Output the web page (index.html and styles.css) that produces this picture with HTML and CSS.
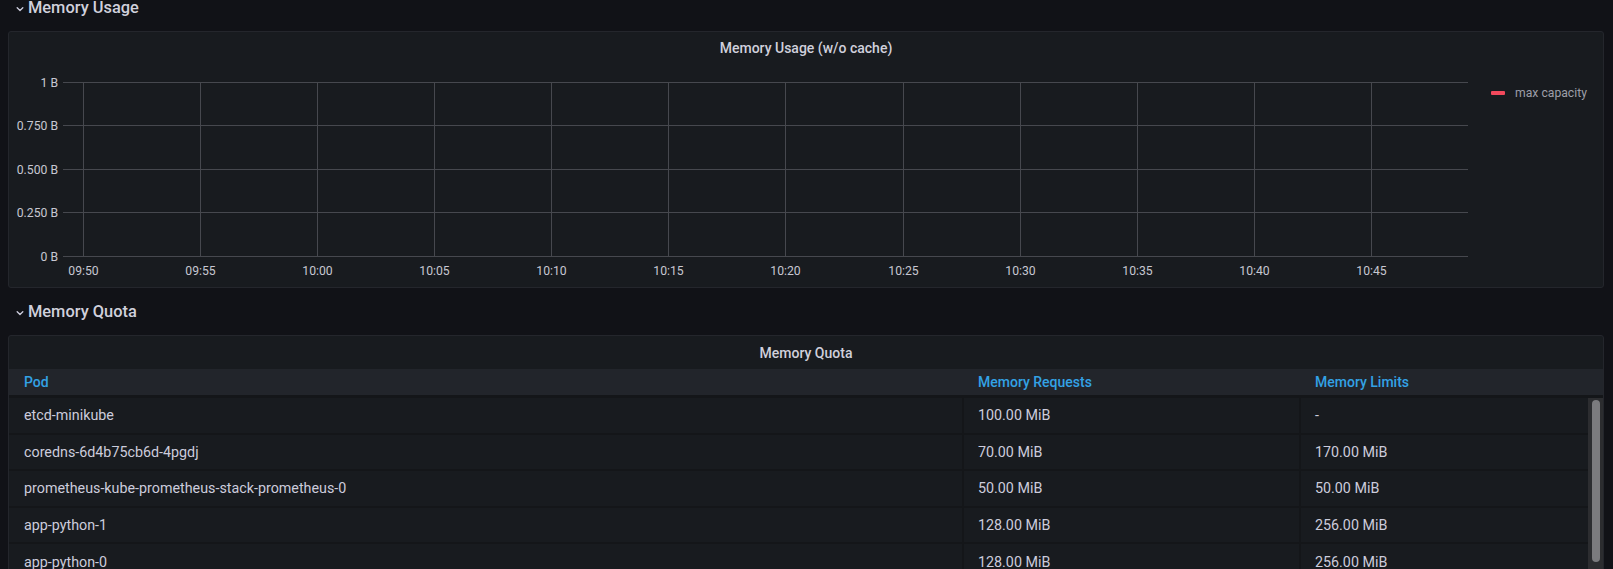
FILE: index.html
```html
<!DOCTYPE html>
<html>
<head>
<meta charset="utf-8">
<link rel="stylesheet" href="styles.css">
</head>
<body>
<div class="page">
  <div class="row-title">
    <svg class="chev" viewBox="0 0 12 12" width="12" height="12"><path d="M3.2 4.8 L6 7.4 L8.8 4.8" fill="none" stroke="#ccccdc" stroke-width="1.4" stroke-linecap="round" stroke-linejoin="round"/></svg>
    <span>Memory Usage</span>
  </div>
  <section class="panel panel-graph">
    <header class="panel-header">Memory Usage (w/o cache)</header>
    <div class="graph-body">
      <svg class="chart" width="1460" height="223" viewBox="0 0 1460 223">
        <g stroke="#46484e" stroke-width="1">
          <line x1="54" y1="18.5" x2="1459" y2="18.5"/>
          <line x1="54" y1="61.5" x2="1459" y2="61.5"/>
          <line x1="54" y1="105.5" x2="1459" y2="105.5"/>
          <line x1="54" y1="148.5" x2="1459" y2="148.5"/>
          <line x1="54" y1="192.5" x2="1459" y2="192.5"/>
          <line x1="74.5" y1="18.5" x2="74.5" y2="192.5"/>
          <line x1="191.5" y1="18.5" x2="191.5" y2="192.5"/>
          <line x1="308.5" y1="18.5" x2="308.5" y2="192.5"/>
          <line x1="425.5" y1="18.5" x2="425.5" y2="192.5"/>
          <line x1="542.5" y1="18.5" x2="542.5" y2="192.5"/>
          <line x1="659.5" y1="18.5" x2="659.5" y2="192.5"/>
          <line x1="776.5" y1="18.5" x2="776.5" y2="192.5"/>
          <line x1="894.5" y1="18.5" x2="894.5" y2="192.5"/>
          <line x1="1011.5" y1="18.5" x2="1011.5" y2="192.5"/>
          <line x1="1128.5" y1="18.5" x2="1128.5" y2="192.5"/>
          <line x1="1245.5" y1="18.5" x2="1245.5" y2="192.5"/>
          <line x1="1362.5" y1="18.5" x2="1362.5" y2="192.5"/>
        </g>
        <g class="ylab" text-anchor="end">
          <text x="49" y="22.5">1 B</text>
          <text x="49" y="65.5">0.750 B</text>
          <text x="49" y="109.5">0.500 B</text>
          <text x="49" y="152.5">0.250 B</text>
          <text x="49" y="196.5">0 B</text>
        </g>
        <g class="xlab" text-anchor="middle">
          <text x="74.5" y="211">09:50</text>
          <text x="191.5" y="211">09:55</text>
          <text x="308.5" y="211">10:00</text>
          <text x="425.5" y="211">10:05</text>
          <text x="542.5" y="211">10:10</text>
          <text x="659.5" y="211">10:15</text>
          <text x="776.5" y="211">10:20</text>
          <text x="894.5" y="211">10:25</text>
          <text x="1011.5" y="211">10:30</text>
          <text x="1128.5" y="211">10:35</text>
          <text x="1245.5" y="211">10:40</text>
          <text x="1362.5" y="211">10:45</text>
        </g>
      </svg>
      <div class="legend">
        <div class="legend-item"><span class="legend-mark"></span><span>max capacity</span></div>
      </div>
    </div>
  </section>

  <div class="row-title">
    <svg class="chev" viewBox="0 0 12 12" width="12" height="12"><path d="M3.2 4.8 L6 7.4 L8.8 4.8" fill="none" stroke="#ccccdc" stroke-width="1.4" stroke-linecap="round" stroke-linejoin="round"/></svg>
    <span>Memory Quota</span>
  </div>
  <section class="panel panel-table">
    <header class="panel-header tall">Memory Quota</header>
    <div class="thead">
      <div class="th">Pod</div>
      <div class="th">Memory Requests</div>
      <div class="th">Memory Limits</div>
    </div>
    <div class="tbody-wrap">
      <div class="tbody">
        <div class="tr"><div class="td">etcd-minikube</div><div class="td sep">100.00 MiB</div><div class="td sep">-</div></div>
        <div class="tr"><div class="td">coredns-6d4b75cb6d-4pgdj</div><div class="td sep">70.00 MiB</div><div class="td sep">170.00 MiB</div></div>
        <div class="tr"><div class="td">prometheus-kube-prometheus-stack-prometheus-0</div><div class="td sep">50.00 MiB</div><div class="td sep">50.00 MiB</div></div>
        <div class="tr"><div class="td">app-python-1</div><div class="td sep">128.00 MiB</div><div class="td sep">256.00 MiB</div></div>
        <div class="tr"><div class="td">app-python-0</div><div class="td sep">128.00 MiB</div><div class="td sep">256.00 MiB</div></div>
        <div class="tr"><div class="td">kube-apiserver-minikube</div><div class="td sep">-</div><div class="td sep">-</div></div>
      </div>
      <div class="scroll-track"><div class="scroll-thumb"></div></div>
    </div>
  </section>
</div>
</body>
</html>
```

FILE: styles.css
```css
html, body {
  margin: 0;
  padding: 0;
  height: 569px;
  overflow: hidden;
  background: #111217;
}

body {
  font-family: Roboto, "Liberation Sans", sans-serif;
  color: #ccccdc;
}

.page {
  margin-top: -16px;
  padding: 0 9px 0 8px;
}

.row-title {
  height: 47px;
  display: flex;
  align-items: center;
  gap: 2px;
  padding-left: 6px;
  font-size: 16.4px;
  font-weight: 500;
  color: #d0d0dc;
}

.chev {
  display: block;
  margin-top: 2px;
}

.panel {
  background: #181b1f;
  border: 1px solid #24262c;
  border-radius: 3px;
  box-sizing: border-box;
}

.panel-graph {
  height: 257px;
}

.panel-header {
  height: 32px;
  display: flex;
  align-items: center;
  justify-content: center;
  font-size: 14px;
  font-weight: 500;
  color: #d0d0dc;
}

.panel-header.tall {
  height: 33px;
}

.graph-body {
  display: flex;
  height: 223px;
}

.chart {
  display: block;
  flex: none;
}

.ylab text, .xlab text {
  font-family: Roboto, "Liberation Sans", sans-serif;
  font-size: 12.2px;
  fill: #c7c7d1;
}

.legend {
  padding-left: 22px;
  padding-top: 21px;
}

.legend-item {
  display: flex;
  align-items: center;
  gap: 10px;
  font-size: 12.2px;
  line-height: 16px;
  color: #9d9ea8;
}

.legend-mark {
  width: 14px;
  height: 4px;
  background: #f2495c;
  border-radius: 1px;
}

.panel-table {
  height: 420px;
}

.thead {
  display: grid;
  grid-template-columns: 953px 337px 1fr;
  height: 26px;
  background: #22252b;
  align-items: center;
}

.th {
  padding-left: 15px;
  font-size: 14px;
  font-weight: 500;
  color: #33a2e5;
}

.th:nth-child(2) {
  padding-left: 16px;
}

.th:nth-child(3) {
  padding-left: 16px;
}

.tbody-wrap {
  display: flex;
  border-top: 3px solid #141619;
}

.tbody {
  flex: 1;
}

.tr {
  display: grid;
  grid-template-columns: 953px 337px 1fr;
  height: 34.6px;
  border-bottom: 2px solid #141619;
}

.td {
  display: flex;
  align-items: center;
  padding-left: 15px;
  font-size: 14.3px;
  color: #ccccdc;
}

.td.sep {
  border-left: 2px solid #141619;
  padding-left: 14px;
}

.scroll-track {
  width: 15px;
  background: #2c2d30;
  padding: 2px 3px 0 4px;
  box-sizing: border-box;
}

.scroll-thumb {
  width: 8px;
  height: 162px;
  background: #7b7b7e;
  border-radius: 4px;
}
```
